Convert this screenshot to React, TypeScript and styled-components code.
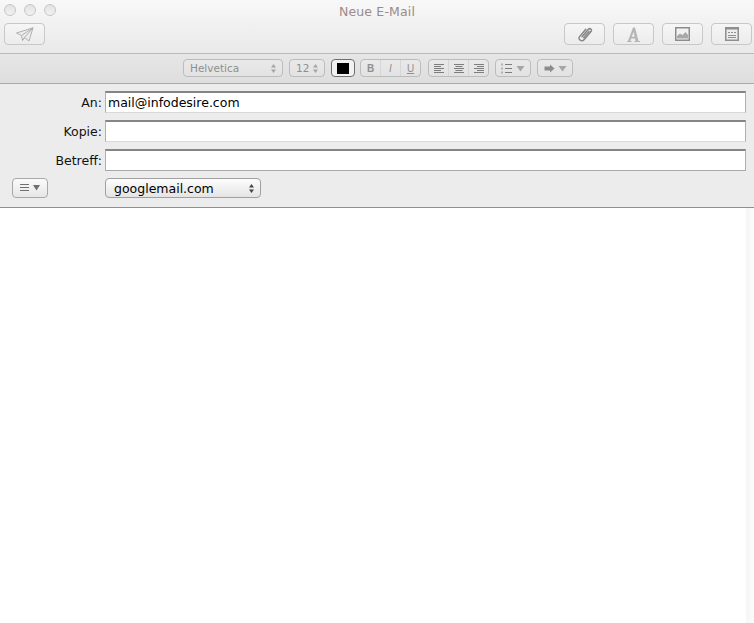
import styled, { createGlobalStyle } from 'styled-components';

const GlobalStyle = createGlobalStyle`
    html, body {
        margin: 0;
        padding: 0;
        height: 100%;
        background: #fff;
        overflow: hidden;
    }
    #root {
        height: 100%;
    }
`;

const Window = styled.div`
    width: 754px;
    height: 623px;
    display: flex;
    flex-direction: column;
    font-family: "DejaVu Sans", sans-serif;
    overflow: hidden;
`;

const TitleBar = styled.header`
    height: 49px;
    padding: 4px 2px 0 4px;
    background: linear-gradient(#f8f8f8, #e9e9e9);
    border-bottom: 1px solid #b9b9b9;
    flex: none;
`;

const TitleRow = styled.div`
    height: 13px;
    display: flex;
    align-items: flex-start;
`;

const Lights = styled.div`
    display: flex;
    gap: 8px;
    width: 52px;
`;

const Light = styled.span`
    width: 12px;
    height: 12px;
    box-sizing: border-box;
    border-radius: 50%;
    border: 1px solid #c6c6c6;
    background: linear-gradient(#e2e2e2, #f1f1f1);
`;

const Title = styled.div`
    flex: 1;
    text-align: center;
    font-size: 12.5px;
    letter-spacing: 0.15px;
    line-height: 13px;
    padding-top: 1px;
    color: #9a8a88;
    padding-right: 54px;
`;

const ToolRow = styled.div`
    margin-top: 6px;
    display: flex;
    justify-content: space-between;
`;

const ToolGroup = styled.div`
    display: flex;
    gap: 8px;
`;

const ToolButton = styled.button`
    width: 41px;
    height: 22px;
    padding: 0;
    display: flex;
    align-items: center;
    justify-content: center;
    box-sizing: border-box;
    border: 1px solid #c8c8c8;
    border-radius: 4px;
    background: linear-gradient(#f6f6f6, #ececec);
`;

const FormatBar = styled.div`
    height: 24px;
    padding: 5px 0 0 183px;
    flex: none;
    display: flex;
    align-items: flex-start;
    background: linear-gradient(#e6e6e6, #dedede);
    border-bottom: 1px solid #a9a9a9;
`;

const Control = styled.div<{ $w: number; $ml?: number }>`
    width: ${p => p.$w}px;
    height: 18px;
    margin-left: ${p => p.$ml ?? 6}px;
    flex: none;
    box-sizing: border-box;
    display: flex;
    align-items: center;
    border: 1px solid #bcbcbc;
    border-radius: 4px;
    color: #8f8f8f;
    font-size: 10.5px;
    background: linear-gradient(#e9e9e9, #e2e2e2);
`;

const FontName = styled.span`
    flex: 1;
    padding-left: 6px;
`;

const Stepper = styled.span`
    display: flex;
    padding-right: 6px;
`;

const Segment = styled.span<{ $last?: boolean }>`
    flex: 1;
    height: 100%;
    display: flex;
    align-items: center;
    justify-content: center;
    gap: 3px;
    font-family: "Liberation Sans", sans-serif;
    font-size: 10px;
    border-right: ${p => (p.$last ? 'none' : '1px solid #d6d6d6')};
`;

const BoldSegment = styled(Segment)`
    font-weight: 700;
`;

const ItalicSegment = styled(Segment)`
    font-style: italic;
`;

const UnderlineSegment = styled(Segment)`
    text-decoration: underline;
`;

const Swatch = styled.div`
    width: 24px;
    height: 18px;
    margin-left: 6px;
    flex: none;
    box-sizing: border-box;
    border: 1px solid #6f6f6f;
    border-radius: 4px;
    display: flex;
    align-items: center;
    justify-content: center;
    background: #f2f2f2;
    &::after {
        content: '';
        width: 12px;
        height: 11px;
        background: #000;
    }
`;

const Fields = styled.section`
    height: 124px;
    flex: none;
    box-sizing: border-box;
    padding-top: 7px;
    background: #ececec;
    border-bottom: 1px solid #8f8f8f;
    display: flex;
    flex-direction: column;
    gap: 7px;
`;

const FieldRow = styled.div`
    display: flex;
    align-items: center;
    height: 22px;
    padding-right: 8px;
`;

const Label = styled.label`
    width: 102px;
    text-align: right;
    font-size: 12.5px;
    color: #111;
    flex: none;
`;

const Input = styled.div<{ $closed?: boolean }>`
    flex: 1;
    margin-left: 3px;
    height: 22px;
    box-sizing: border-box;
    padding-left: 2px;
    background: #fff;
    border: 1px solid #b0b0b0;
    border-top: 2px solid #858585;
    border-bottom-color: ${p => (p.$closed ? '#a8a8a8' : '#d8d8d8')};
    font-size: 12.5px;
    line-height: 20px;
    color: #000;
`;

const OptionsRow = styled.div`
    display: flex;
    align-items: flex-start;
    padding-left: 12px;
    height: 22px;
`;

const OptionsButton = styled.div`
    width: 36px;
    height: 20px;
    box-sizing: border-box;
    border: 1px solid #a8a8a8;
    border-radius: 4px;
    background: linear-gradient(#fbfbfb, #e6e6e6);
    display: flex;
    align-items: center;
    justify-content: center;
`;

const AccountSelect = styled.div`
    width: 156px;
    height: 20px;
    margin-left: 57px;
    box-sizing: border-box;
    padding: 0 6px 0 8px;
    border: 1px solid #a0a0a0;
    border-radius: 4px;
    background: linear-gradient(#fdfdfd, #e4e4e4);
    display: flex;
    align-items: center;
    justify-content: space-between;
    font-size: 12.5px;
    color: #000;
`;

const Body = styled.main`
    flex: 1;
    background: linear-gradient(to right, #fff 746px, #f6f6f6 746px, #fbfbfb 754px);
`;

const Updown = ({ color = '#a6a6a6' }: { color?: string }) => (
    <svg width="5" height="9" viewBox="0 0 5 9">
        <path d="M2.5 0 L5 3.5 H0 Z M0 5.5 H5 L2.5 9 Z" fill={color} />
    </svg>
);

const Down = () => (
    <svg width="9" height="7" viewBox="0 0 9 7">
        <path d="M0.5 1 H8.5 L4.5 6.5 Z" fill="#a6a6a6" />
    </svg>
);

const Lines = ({ d }: { d: string }) => (
    <svg width="12" height="11" viewBox="0 0 12 11">
        <path d={d} stroke="#7d7d7d" strokeWidth="1" fill="none" />
    </svg>
);

export default function App() {
    return (
        <Window>
            <GlobalStyle />
            <TitleBar>
                <TitleRow>
                    <Lights>
                        <Light />
                        <Light />
                        <Light />
                    </Lights>
                    <Title>Neue E-Mail</Title>
                </TitleRow>
                <ToolRow>
                    <ToolButton>
                        <svg width="18" height="15" viewBox="0 0 18 15" fill="#ececec" stroke="#b0b0b0" strokeWidth="1" strokeLinejoin="round">
                            <path d="M0.5 6 L17 0.8 L13 14 L8.5 10.5 L6.5 13.5 L5.5 8.5 Z" />
                            <path d="M5.5 8.5 L17 0.8 L8.5 10.5 L6.5 13.5" fill="none" />
                        </svg>
                    </ToolButton>
                    <ToolGroup>
                        <ToolButton>
                            <svg width="16" height="15" viewBox="0 0 16 15" fill="none" stroke="#868686" strokeWidth="1.5" strokeLinecap="round">
                                <path d="M5.2 9.6 L11.2 2.4 C12.8 0.6 15.6 2.6 14 4.6 L7 12.8 C4.8 15.2 0.4 12.4 2.6 9.6 L8.8 2.2" />
                                <path d="M6.8 10.6 L12 4.4" />
                            </svg>
                        </ToolButton>
                        <ToolButton>
                            <svg width="13" height="15" viewBox="0 0 13 15">
                                <path d="M0 15 V14 H1 L6 0.5 H8 L11.5 14 H13 V15 H7.5 V14 H8.5 L8 11.5 H4.2 L3.4 14 H4.6 V15 Z M4.8 9.8 H7.6 L6.6 5 Z" fill="#b6b6b6" fillRule="evenodd" />
                            </svg>
                        </ToolButton>
                        <ToolButton>
                            <svg width="15" height="14" viewBox="0 0 15 14">
                                <rect x="0" y="0" width="15" height="14" fill="#8c8c8c" />
                                <rect x="1.5" y="1.5" width="12" height="11" fill="#f2f2f2" />
                                <path d="M2 11.5 V9 L5 6.5 L7.5 8 L10.5 5 L13 8 V11.5 Z" fill="#a8a8a8" />
                            </svg>
                        </ToolButton>
                        <ToolButton>
                            <svg width="14" height="14" viewBox="0 0 14 14">
                                <rect x="0" y="0" width="14" height="14" fill="#8f8f8f" />
                                <rect x="1.5" y="2.5" width="11" height="10" fill="#ececec" />
                                <path d="M3 5.5 H5 M6 5.5 H8 M9 5.5 H11 M3 8.5 H11 M3 10.5 H11" stroke="#8f8f8f" />
                            </svg>
                        </ToolButton>
                    </ToolGroup>
                </ToolRow>
            </TitleBar>
            <FormatBar>
                <Control $w={100} $ml={0}>
                    <FontName>Helvetica</FontName>
                    <Stepper>
                        <Updown />
                    </Stepper>
                </Control>
                <Control $w={36}>
                    <FontName>12</FontName>
                    <Stepper>
                        <Updown />
                    </Stepper>
                </Control>
                <Swatch />
                <Control $w={61} $ml={5}>
                    <BoldSegment>B</BoldSegment>
                    <ItalicSegment>I</ItalicSegment>
                    <UnderlineSegment $last>U</UnderlineSegment>
                </Control>
                <Control $w={61} $ml={7}>
                    <Segment><Lines d="M1 1.5 H11 M1 3.5 H8 M1 5.5 H11 M1 7.5 H8 M1 9.5 H11" /></Segment>
                    <Segment><Lines d="M1 1.5 H11 M2.5 3.5 H9.5 M1 5.5 H11 M2.5 7.5 H9.5 M1 9.5 H11" /></Segment>
                    <Segment $last><Lines d="M1 1.5 H11 M4 3.5 H11 M1 5.5 H11 M4 7.5 H11 M1 9.5 H11" /></Segment>
                </Control>
                <Control $w={36}>
                    <Segment $last>
                        <Lines d="M1 0.5 V2.5 M1 4.5 V6.5 M1 8.5 V10.5 M4 1.5 H11 M4 5.5 H11 M4 9.5 H11" />
                        <Down />
                    </Segment>
                </Control>
                <Control $w={36}>
                    <Segment $last>
                        <svg width="11" height="9" viewBox="0 0 11 9">
                            <path d="M0.5 2.5 H6 V0.5 L10.5 4.5 L6 8.5 V6.5 H0.5 Z" fill="#8c8c8c" />
                        </svg>
                        <Down />
                    </Segment>
                </Control>
            </FormatBar>
            <Fields>
                <FieldRow>
                    <Label>An:</Label>
                    <Input>mail@infodesire.com</Input>
                </FieldRow>
                <FieldRow>
                    <Label>Kopie:</Label>
                    <Input />
                </FieldRow>
                <FieldRow>
                    <Label>Betreff:</Label>
                    <Input $closed />
                </FieldRow>
                <OptionsRow>
                    <OptionsButton>
                        <svg width="20" height="8" viewBox="0 0 20 8">
                            <path d="M0 0.5 H9 M0 3.5 H9 M0 6.5 H9" stroke="#707070" />
                            <path d="M13 1 H20 L16.5 6.5 Z" fill="#707070" />
                        </svg>
                    </OptionsButton>
                    <AccountSelect>
                        googlemail.com
                        <Updown color="#444" />
                    </AccountSelect>
                </OptionsRow>
            </Fields>
            <Body />
        </Window>
    );
}
